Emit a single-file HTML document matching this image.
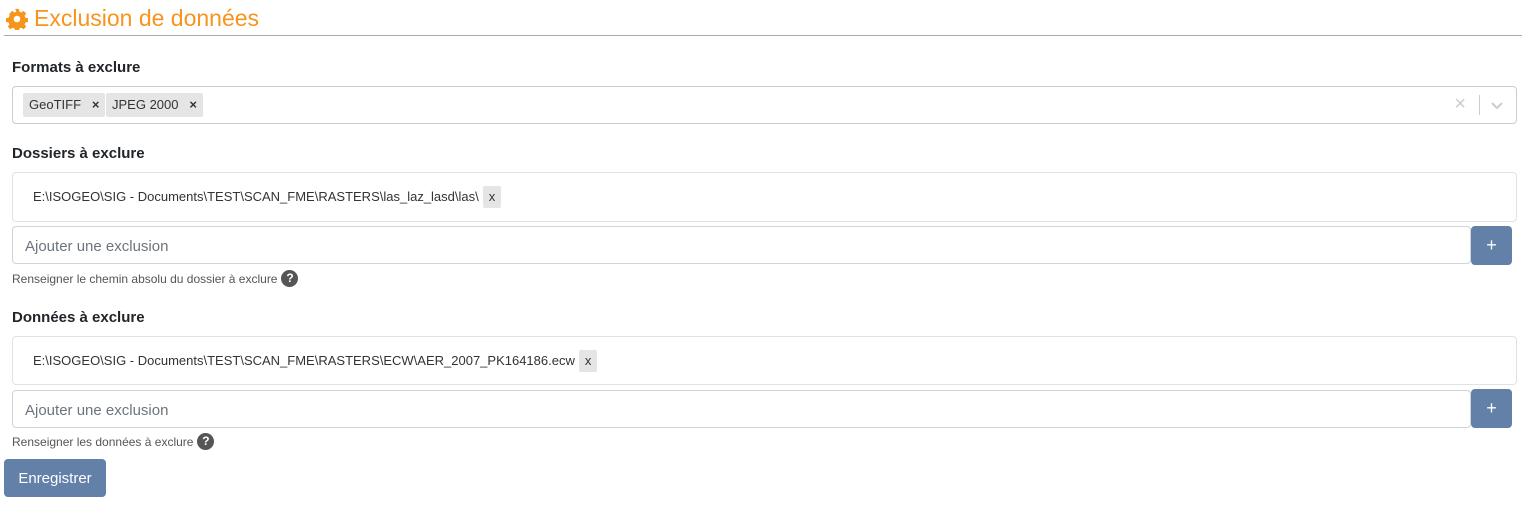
<!DOCTYPE html>
<html><head><meta charset="utf-8"><style>
*{box-sizing:border-box}
body{margin:0;width:1522px;height:505px;background:#fff;font-family:"Liberation Sans",sans-serif;color:#212529;position:relative;overflow:hidden}
.a{position:absolute}
.h{left:6px;top:5px;font-size:23px;color:#f7941d;display:flex;align-items:center}
.line{left:4px;top:35px;width:1518px;height:1px;background:#aaa}
.lbl{left:12px;font-size:15px;font-weight:bold}
.box{border:1px solid #ccc;border-radius:4px;background:#fff}
.tag{position:absolute;background:#e5e5e5;border-radius:2px;font-size:13px;height:24px;line-height:24px;padding:0 6px;color:#333}
.inp{border:1px solid #ced4da;border-radius:4px;font-size:15px;color:#6c757d;padding-left:12px;line-height:40px;height:38px}
.btn{background:#6381a8;color:#fff;border-radius:4px;text-align:center}
.hint{left:12px;font-size:12px;color:#555;display:flex;align-items:center;gap:4px}
.q{width:17px;height:17px;border-radius:50%;background:#555;color:#fff;font-size:12px;font-weight:bold;text-align:center;line-height:17px}
.row{font-size:13px;color:#333}
.x{background:#e5e5e5;display:inline-block;padding:0 6px;height:22px;line-height:22px;border-radius:2px;margin-left:4px}
</style></head><body>
<div class="a h"><svg width="22" height="22" viewBox="0 0 24 24"><path fill="#f7941d" d="M10 1h4l.6 3 2 .9 2.6-1.7 2.8 2.8-1.7 2.6.9 2 3 .6v4l-3 .6-.9 2 1.7 2.6-2.8 2.8-2.6-1.7-2 .9-.6 3h-4l-.6-3-2-.9-2.6 1.7-2.8-2.8 1.7-2.6-.9-2-3-.6v-4l3-.6.9-2L3.9 6l2.8-2.8 2.6 1.7 2-.9z"/><circle cx="12" cy="12" r="3.6" fill="#fff"/></svg><span style="margin-left:6px">Exclusion de données</span></div>
<div class="a line"></div>
<div class="a lbl" style="top:59px">Formats à exclure</div>
<div class="a box" style="left:12px;top:86px;width:1505px;height:38px">
<div class="tag" style="left:10px;top:6px">GeoTIFF &nbsp; <b>×</b></div>
<div class="tag" style="left:93px;top:6px">JPEG 2000 &nbsp; <b>×</b></div>
<div class="a" style="right:50px;top:6px;color:#ccc;font-size:20px">×</div>
<div class="a" style="right:36px;top:8px;width:1px;height:20px;background:#ccc"></div>
<svg class="a" style="right:12px;top:14px" width="14" height="10" viewBox="0 0 14 10"><path d="M2 2l5 5 5-5" stroke="#ccc" stroke-width="2" fill="none"/></svg>
</div>
<div class="a lbl" style="top:145px">Dossiers à exclure</div>
<div class="a box" style="left:12px;top:172px;width:1505px;height:50px;border-color:#e2e2e2"><div class="a row" style="left:20px;top:13px">E:\ISOGEO\SIG - Documents\TEST\SCAN_FME\RASTERS\las_laz_lasd\las\<span class="x">x</span></div></div>
<div class="a inp" style="left:12px;top:226px;width:1459px">Ajouter une exclusion</div>
<div class="a btn" style="left:1471px;top:226px;width:41px;height:39px;line-height:38px;font-size:18px">+</div>
<div class="a hint" style="top:270px">Renseigner le chemin absolu du dossier à exclure <span class="q">?</span></div>
<div class="a lbl" style="top:309px">Données à exclure</div>
<div class="a box" style="left:12px;top:336px;width:1505px;height:49px;border-color:#e2e2e2"><div class="a row" style="left:20px;top:13px">E:\ISOGEO\SIG - Documents\TEST\SCAN_FME\RASTERS\ECW\AER_2007_PK164186.ecw<span class="x">x</span></div></div>
<div class="a inp" style="left:12px;top:390px;width:1459px">Ajouter une exclusion</div>
<div class="a btn" style="left:1471px;top:389px;width:41px;height:39px;line-height:38px;font-size:18px">+</div>
<div class="a hint" style="top:433px">Renseigner les données à exclure <span class="q">?</span></div>
<div class="a btn" style="left:4px;top:459px;width:102px;height:38px;line-height:40px;font-size:15px">Enregistrer</div>
</body></html>
